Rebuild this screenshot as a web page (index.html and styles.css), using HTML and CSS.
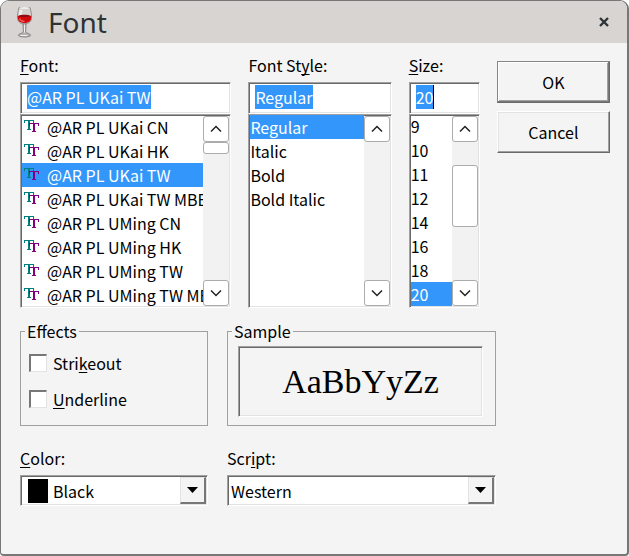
FILE: index.html
```html
<!DOCTYPE html>
<html lang="en">
<head>
<meta charset="utf-8">
<title>Font</title>
<link rel="stylesheet" href="styles.css">
</head>
<body>
<svg width="0" height="0" class="defs" aria-hidden="true">
  <symbol id="tt" viewBox="0 0 16 14">
    <path fill="#008080" d="M0 0h10v3H9V1H6v8h1v1H3V9h1V1H1v2H0z"/>
    <path fill="#800080" d="M5 3h10v3h-1V4h-3v7h1v1H8v-1h1V4H6v2H5z"/>
  </symbol>
  <symbol id="up" viewBox="0 0 12 8"><path d="M1 6.500 6 1.500l5 5" fill="none" stroke="#222" stroke-width="1.500"/></symbol>
  <symbol id="down" viewBox="0 0 12 8"><path d="M1 1.500l5 5 5-5" fill="none" stroke="#222" stroke-width="1.500"/></symbol>
  <symbol id="drop" viewBox="0 0 11 6"><path d="M0 0h11L5.500 6z"/></symbol>
</svg>
<main class="dialog">
  <header class="titlebar">
    <svg class="wine" viewBox="0 0 16 32" aria-hidden="true">
      <path d="M2.500 1.500h11c1 4 2 8 1.500 11-.5 3.500-3 5.500-7 5.500s-6.500-2-7-5.500C.5 9.500 1.500 5.500 2.500 1.500z" fill="#d3d0ce" stroke="#92908e"/>
      <ellipse cx="8" cy="2" rx="5" ry="1" fill="#efedec"/>
      <path d="M3 4h3L5 9H2.500z" fill="#efedec"/>
      <path d="M1.200 10c3-1.500 10.600-1.500 13.600 0 .2 5-2.300 7-6.800 7s-7-2-6.800-7z" fill="#d0090c"/>
      <path d="M2 10c3-1.600 9-1.600 12 0-3 1.400-9 1.400-12 0z" fill="#8a0c10"/>
      <path d="M3 12.500c1 2 2.500 3 5 3" stroke="#f4635e" stroke-width="1.300" fill="none"/>
      <path d="M6.500 18h3l-.3 8c1 1.500 4.800 1.500 5 3.500-2 2-10.400 2-12.400 0 .2-2 4-2 5-3.500z" fill="#b4b2b0" stroke="#7c7a78" stroke-width=".8"/>
      <path d="M8 18.500v8M4 29.500h7" stroke="#f0f0f0"/>
    </svg>
    <h1>Font</h1>
    <button class="close" aria-label="Close"><svg viewBox="0 0 10 10"><path d="M1 1l8 8M9 1L1 9" stroke="#2e3436" stroke-width="2.400"/></svg></button>
  </header>
  <form class="content">
    <div class="choices">
      <section class="field">
        <label for="font"><u>F</u>ont:</label>
        <div class="sunken edit"><input id="font" type="text" size="13" value="@AR PL UKai TW"></div>
        <div class="sunken list">
          <ul role="listbox" aria-label="Fonts">
            <li role="option"><svg><use href="#tt"/></svg>@AR PL UKai CN</li>
            <li role="option"><svg><use href="#tt"/></svg>@AR PL UKai HK</li>
            <li role="option" aria-selected="true"><svg><use href="#tt"/></svg>@AR PL UKai TW</li>
            <li role="option"><svg><use href="#tt"/></svg>@AR PL UKai TW MBE</li>
            <li role="option"><svg><use href="#tt"/></svg>@AR PL UMing CN</li>
            <li role="option"><svg><use href="#tt"/></svg>@AR PL UMing HK</li>
            <li role="option"><svg><use href="#tt"/></svg>@AR PL UMing TW</li>
            <li role="option"><svg><use href="#tt"/></svg>@AR PL UMing TW MBE</li>
          </ul>
          <div class="scroll">
            <button type="button" aria-label="Scroll up"><svg><use href="#up"/></svg></button>
            <div class="track"><span class="thumb short"></span></div>
            <button type="button" aria-label="Scroll down"><svg><use href="#down"/></svg></button>
          </div>
        </div>
      </section>
      <section class="field">
        <label for="style">Font St<u>y</u>le:</label>
        <div class="sunken edit"><input id="style" type="text" size="6" value="Regular"></div>
        <div class="sunken list">
          <select size="8" aria-label="Font styles">
            <option selected>Regular</option><option>Italic</option><option>Bold</option><option>Bold Italic</option>
          </select>
          <div class="scroll">
            <button type="button" aria-label="Scroll up"><svg><use href="#up"/></svg></button>
            <div class="track"></div>
            <button type="button" aria-label="Scroll down"><svg><use href="#down"/></svg></button>
          </div>
        </div>
      </section>
      <section class="field">
        <label for="size"><u>S</u>ize:</label>
        <div class="sunken edit caret"><input id="size" type="text" size="2" value="20"></div>
        <div class="sunken list">
          <select size="8" aria-label="Sizes">
            <option>9</option><option>10</option><option>11</option><option>12</option><option>14</option><option>16</option><option>18</option><option selected>20</option>
          </select>
          <div class="scroll">
            <button type="button" aria-label="Scroll up"><svg><use href="#up"/></svg></button>
            <div class="track middle"><span class="thumb long"></span></div>
            <button type="button" aria-label="Scroll down"><svg><use href="#down"/></svg></button>
          </div>
        </div>
      </section>
      <div class="actions">
        <button type="submit" class="push default">OK</button>
        <button type="button" class="push">Cancel</button>
      </div>
    </div>
    <div class="options">
      <fieldset class="effects">
        <legend>Effects</legend>
        <label class="check"><input type="checkbox"><span>Stri<u>k</u>eout</span></label>
        <label class="check"><input type="checkbox"><span><u>U</u>nderline</span></label>
      </fieldset>
      <fieldset class="sample">
        <legend>Sample</legend>
        <div class="sunken preview">AaBbYyZz</div>
      </fieldset>
      <section class="field">
        <label for="color"><u>C</u>olor:</label>
        <div class="sunken combo">
          <span class="swatch"></span>
          <select id="color"><option>Black</option></select>
          <span class="arrow"><svg><use href="#drop"/></svg></span>
        </div>
      </section>
      <section class="field">
        <label for="script">Scr<u>i</u>pt:</label>
        <div class="sunken combo">
          <select id="script"><option>Western</option></select>
          <span class="arrow"><svg><use href="#drop"/></svg></span>
        </div>
      </section>
    </div>
  </form>
</main>
</body>
</html>
```
FILE: styles.css
```css
* { box-sizing: border-box; }
html { background: #fff; }
body {
  margin: 0;
  color: #000;
  font: 16px/24px "Noto Sans CJK SC", sans-serif;
}
button, input, select { font: inherit; color: inherit; margin: 0; padding: 0; border: 0; border-radius: 0; outline: 0; }
svg { display: block; }
.defs { position: absolute; }
u { text-decoration-thickness: 1px; text-underline-offset: 2px; text-decoration-skip-ink: none; }

.dialog {
  min-height: 100vh;
  background: #f4f4f4;
  border: 2px solid #777;
  border-top-width: 1px;
  border-left-width: 1px;
  border-radius: 9px 9px 4px 4px;
  overflow: hidden;
}
.titlebar {
  display: flex;
  align-items: center;
  height: 42px;
  padding: 0 18px 0 15px;
  background: #d8d4d1;
}
.wine { width: 17px; height: 32px; }
h1 { flex: 1; margin: 0 0 0 15px; font: 28px/40px "Noto Sans", sans-serif; color: #2e3436; }
.close { background: none; }
.close svg { width: 10px; height: 10px; }

.content { padding: 10px 17px 24px 19px; }
.choices { display: grid; grid-template-columns: 211fr 143fr 71fr 113fr; gap: 17px; }
.field { display: flex; flex-direction: column; min-width: 0; }
.field > label { margin-bottom: 5px; }

.sunken {
  border: 1px solid #fff;
  border-top-color: #a0a0a0;
  border-left-color: #a0a0a0;
  box-shadow: inset 1px 1px #696969, inset -1px -1px #e3e3e3;
}
.edit { display: flex; height: 32px; padding: 2px 6px; background: #fff; }
.edit input { field-sizing: content; height: 24px; background: #3296fa; color: #fff; }
.caret input { border-right: 1px solid #000; }

.list { display: flex; height: 194px; padding: 0 1px 1px; background: #fff; }
.list ul, .list select { flex: 1; min-width: 0; height: 191px; margin: 0; padding: 0; overflow: hidden; list-style: none; background: #fff; }
.list ul, .list select, .scroll { box-shadow: inset 0 1px #696969; }
.list li { display: flex; align-items: center; gap: 7px; height: 24px; padding-left: 2px; white-space: nowrap; }
.list li svg { flex: none; width: 16px; height: 14px; }
.list option { height: 24px; min-height: 24px; padding: 0; line-height: 24px; }
.list [aria-selected="true"] { background: #3296fa; color: #fff; }
.list option:checked { background: #3296fa linear-gradient(#3296fa, #3296fa); color: #fff; }

.scroll { flex: none; display: flex; flex-direction: column; width: 26px; padding-top: 1px; background: #f2f2f2; }
.scroll button, .thumb { border: 1px solid #acacac; border-radius: 3px; background: #fff; }
.scroll button { display: grid; place-items: center; height: 26px; }
.scroll button svg { width: 12px; height: 8px; }
.track { flex: 1; display: flex; flex-direction: column; }
.middle { padding-top: 23px; }
.short { height: 12px; }
.long { height: 62px; }

.actions { display: flex; flex-direction: column; gap: 8px; padding-top: 8px; }
.push {
  height: 42px;
  background: #f4f4f4;
  border: 1px solid #fff;
  border-right-color: #696969;
  border-bottom-color: #696969;
  box-shadow: inset -1px -1px #a0a0a0, inset 1px 1px #e3e3e3;
}
.default { border-color: #858585 #696969 #696969 #858585; box-shadow: inset -1px -1px #777, inset 1px 1px #fff, inset -2px -2px #a0a0a0; }

.options {
  display: grid;
  grid-template-columns: 188fr 269fr;
  gap: 20px 19px;
  margin: 11px 114px 0 0;
}
fieldset { min-width: 0; margin: 0; border: 1px solid #a0a0a0; }
legend { margin: 0 0 0 -4px; padding: 0 2px; }
.effects { display: flex; flex-direction: column; gap: 12px; padding: 8px 8px 13px; }
.sample { padding: 3px 12px 8px 10px; }
.sample legend { margin-left: -6px; }
.check { display: flex; align-items: center; gap: 6px; }
.check input { appearance: none; width: 18px; height: 18px; background: #fff; border: 1px solid #e3e3e3; border-top: 2px solid #777; border-left: 2px solid #777; }
.preview { display: grid; place-items: center; height: 71px; font: 34px/40px "Liberation Serif", serif; }

.combo { display: flex; align-items: center; height: 31px; padding: 1px; background: #fff; }
.combo select { flex: 1; min-width: 0; appearance: none; background: none; padding-left: 2px; }
.swatch { width: 20px; height: 24px; margin: 0 3px 0 6px; background: #000; }
.arrow { display: grid; place-items: center; align-self: stretch; width: 26px; background: #f4f4f4; border: 1px solid #e3e3e3; border-right: 2px solid #777; border-bottom: 2px solid #777; pointer-events: none; }
.arrow svg { width: 11px; height: 6px; }
```
